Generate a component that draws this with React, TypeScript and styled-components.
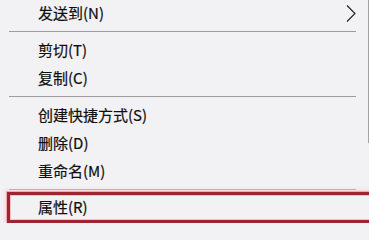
import React from "react";
import styled, { createGlobalStyle } from "styled-components";

const GlobalStyle = createGlobalStyle`
  html, body {
    margin: 0;
    padding: 0;
    background: #f2f1f3;
  }
  body {
    font-family: "Noto Sans CJK SC", "Noto Sans", sans-serif;
  }
`;

type Entry =
  | { kind: "item"; label: string; submenu?: boolean; highlighted?: boolean }
  | { kind: "sep" };

const entries: Entry[] = [
  { kind: "item", label: "发送到(N)", submenu: true },
  { kind: "sep" },
  { kind: "item", label: "剪切(T)" },
  { kind: "item", label: "复制(C)" },
  { kind: "sep" },
  { kind: "item", label: "创建快捷方式(S)" },
  { kind: "item", label: "删除(D)" },
  { kind: "item", label: "重命名(M)" },
  { kind: "sep" },
  { kind: "item", label: "属性(R)", highlighted: true },
];

const ChevronIcon = () => (
  <svg width="10" height="17" viewBox="0 0 10 17">
    <polyline
      points="1,0.5 9,8.5 1,16.5"
      fill="none"
      stroke="#1e1e1e"
      strokeWidth="1.1"
    />
  </svg>
);

const App = () => {
  return (
    <Menu>
      <GlobalStyle />
      {entries.map((e, i) =>
        e.kind === "sep" ? (
          <Separator key={i} />
        ) : (
          <Item key={i} $highlighted={e.highlighted}>
            <Label>{e.label}</Label>
            {e.submenu && (
              <Arrow>
                <ChevronIcon />
              </Arrow>
            )}
          </Item>
        )
      )}
    </Menu>
  );
};
export default App;

const Menu = styled.div`
  position: relative;
  width: 369px;
  height: 223px;
  overflow: hidden;
  background: #f2f1f3;
  display: flex;
  flex-direction: column;

  &::after {
    content: "";
    position: absolute;
    right: 0;
    top: 0;
    width: 1px;
    height: 143px;
    background: #a3a2a4;
  }
`;

const Item = styled.div<{ $highlighted?: boolean }>`
  box-sizing: border-box;
  display: flex;
  align-items: center;
  height: 28px;
  padding-left: 38px;
  padding-right: 13px;
  flex: 0 0 auto;

  ${({ $highlighted }) =>
    $highlighted &&
    `
    align-self: flex-start;
    width: 400px;
    height: 31px;
    margin-top: -3px;
    margin-left: 7px;
    padding-left: 28px;
    border: 3px solid #9c2530;
    box-shadow: 0 0 0 1px #f3a9b3, 0 0 3px 2px #f8d3d8,
      inset 0 0 0 1px #f6c0c7;
  `}
`;

const Label = styled.span`
  flex: 1;
  font-size: 15px;
  line-height: 25px;
  padding-bottom: 3px;
  color: #0e0e0e;
  white-space: nowrap;
  -webkit-text-stroke: 0.2px #0e0e0e;
`;

const Arrow = styled.span`
  display: flex;
  align-items: center;
  margin-top: -1px;
`;

const Separator = styled.div`
  flex: 0 0 auto;
  height: 1px;
  margin: 3px 13px 5px 9px;
  background: #9d9c9e;
`;
